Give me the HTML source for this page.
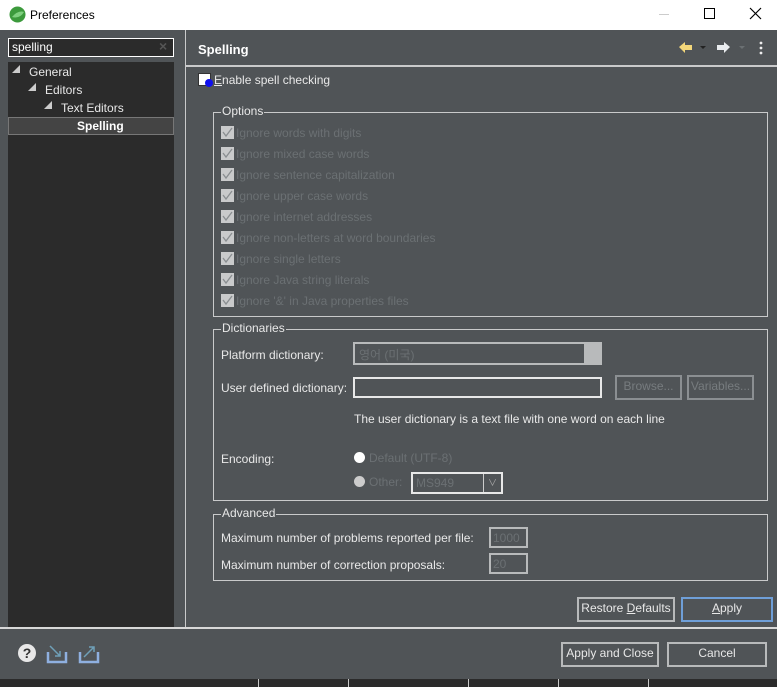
<!DOCTYPE html>
<html><head><meta charset="utf-8"><style>
*{margin:0;padding:0;box-sizing:border-box}
body{width:777px;height:687px;overflow:hidden;background:#505457;font-family:"Liberation Sans","Noto Sans CJK KR",sans-serif;font-size:12px;color:#e8e8e8;position:relative}
.a{position:absolute;white-space:nowrap}
.dis{color:#6b7073}
.cb{position:absolute;width:13px;height:13px;background:#c9cacb;left:221px}
.cb svg{position:absolute;left:1px;top:1px}
.grp{position:absolute;border:1px solid #c9cacb}
.gl{position:absolute;background:#505457;padding:0 1px;top:-9px;left:7px;color:#e8e8e8}
.btn{position:absolute;border:2px solid #b8babb;text-align:center;line-height:19px;color:#e8e8e8}
.dbtn{position:absolute;border:2px solid #8b8f92;text-align:center;line-height:19px;color:#777c7f}
</style></head><body>
<div class="a" style="left:0;top:0;width:777px;height:30px;background:#fff"></div>
<svg class="a" style="left:9px;top:6px" width="17" height="17"><circle cx="8.5" cy="8.5" r="8" fill="#3c9a3c"/><path d="M3 11 Q9 4 15 6 Q11 13 3 11Z" fill="#7fd07f"/></svg>
<div class="a" style="left:30px;top:8px;color:#000;font-size:12px">Preferences</div>
<div class="a" style="left:659px;top:14px;width:10px;height:1px;background:#ccc"></div>
<div class="a" style="left:704px;top:8px;width:11px;height:11px;border:1px solid #000"></div>
<svg class="a" style="left:749px;top:7px" width="13" height="13"><path d="M1 1L12 12M12 1L1 12" stroke="#000" stroke-width="1.2"/></svg>

<div class="a" style="left:8px;top:38px;width:166px;height:19px;border:1px solid #fff;background:#2b2b2b"></div>
<div class="a" style="left:12px;top:40px;color:#fff;font-size:12px">spelling</div>
<div class="a" style="left:159px;top:38px;color:#555;font-size:14px;font-weight:bold">×</div>
<div class="a" style="left:8px;top:62px;width:166px;height:566px;background:#2b2b2b"></div>
<div class="a" style="left:12px;top:64px;color:#ccc;font-size:8px">◢</div><div class="a" style="left:29px;top:65px">General</div>
<div class="a" style="left:28px;top:82px;color:#ccc;font-size:8px">◢</div><div class="a" style="left:45px;top:83px">Editors</div>
<div class="a" style="left:44px;top:100px;color:#ccc;font-size:8px">◢</div><div class="a" style="left:61px;top:101px">Text Editors</div>
<div class="a" style="left:8px;top:117px;width:166px;height:18px;background:#444;border:1px solid #777"></div>
<div class="a" style="left:77px;top:119px;font-weight:bold;color:#fff">Spelling</div>
<div class="a" style="left:185px;top:30px;width:1px;height:598px;background:#c9cacb"></div>

<div class="a" style="left:198px;top:42px;font-weight:bold;font-size:13px;color:#fff">Spelling</div>
<div class="a" style="left:186px;top:65px;width:591px;height:2px;background:#c9cacb"></div>
<svg class="a" style="left:678px;top:40px" width="90" height="16"><path d="M1 7L7 2V5H14V10H7V13Z" fill="#f3d77a"/><path d="M22 6L28 6L25 9Z" fill="#222"/><path d="M52 7L46 2V5H39V10H46V13Z" fill="#e9ecef"/><path d="M61 6L67 6L64 9Z" fill="#6b7073"/><circle cx="83" cy="3" r="1.4" fill="#eee"/><circle cx="83" cy="8" r="1.4" fill="#eee"/><circle cx="83" cy="13" r="1.4" fill="#eee"/></svg>

<div class="a" style="left:198px;top:73px;width:13px;height:13px;background:#fff;border:1px solid #333"></div>
<div class="a" style="left:205px;top:79px;width:8px;height:8px;border-radius:50%;background:#1010ee"></div>
<div class="a" style="left:214px;top:73px"><u>E</u>nable spell checking</div>

<div class="grp" style="left:213px;top:112px;width:555px;height:205px"><div class="gl">Options</div></div>
<div id="opts"></div>

<div class="grp" style="left:213px;top:329px;width:555px;height:172px"><div class="gl">Dictionaries</div></div>
<div class="a" style="left:221px;top:348px">Platform dictionary:</div>
<div class="a" style="left:353px;top:342px;width:249px;height:23px;border:2px solid #b8babb;background:#505457"></div>
<div class="a" style="left:584px;top:344px;width:16px;height:19px;background:#b8babb"></div>
<div class="a dis" style="left:359px;top:346px">영어 (미국)</div>
<div class="a" style="left:221px;top:381px">User defined dictionary:</div>
<div class="a" style="left:353px;top:377px;width:249px;height:21px;border:2px solid #e8e8e8"></div>
<div class="dbtn" style="left:615px;top:375px;width:67px;height:25px">Browse...</div>
<div class="dbtn" style="left:687px;top:375px;width:67px;height:25px">Variables...</div>
<div class="a" style="left:354px;top:412px">The user dictionary is a text file with one word on each line</div>
<div class="a" style="left:221px;top:452px">Encoding:</div>
<div class="a" style="left:354px;top:452px;width:11px;height:11px;border-radius:50%;background:#fff"></div>
<div class="a dis" style="left:369px;top:451px">Default (UTF-8)</div>
<div class="a" style="left:354px;top:476px;width:11px;height:11px;border-radius:50%;background:#ccc"></div>
<div class="a dis" style="left:369px;top:475px">Other:</div>
<div class="a" style="left:411px;top:472px;width:92px;height:22px;border:2px solid #e8e8e8"></div>
<div class="a" style="left:483px;top:474px;width:18px;height:18px;background:#505457;border-left:1px solid #ccc;color:#aaa;font-size:9px;text-align:center;line-height:18px">∨</div>
<div class="a dis" style="left:416px;top:476px">MS949</div>

<div class="grp" style="left:213px;top:514px;width:555px;height:67px"><div class="gl">Advanced</div></div>
<div class="a" style="left:221px;top:531px">Maximum number of problems reported per file:</div>
<div class="a" style="left:489px;top:527px;width:39px;height:21px;border:2px solid #b8babb"></div>
<div class="a dis" style="left:493px;top:531px">1000</div>
<div class="a" style="left:221px;top:558px">Maximum number of correction proposals:</div>
<div class="a" style="left:489px;top:553px;width:39px;height:21px;border:2px solid #b8babb"></div>
<div class="a dis" style="left:493px;top:557px">20</div>

<div class="btn" style="left:577px;top:597px;width:98px;height:25px">Restore <u>D</u>efaults</div>
<div class="btn" style="left:681px;top:597px;width:92px;height:25px;border-color:#6f9fd8"><u>A</u>pply</div>

<div class="a" style="left:0;top:627px;width:777px;height:2px;background:#d8d8d8"></div>
<svg class="a" style="left:17px;top:643px" width="90" height="22"><circle cx="10" cy="10" r="9" fill="#e8e8e8"/><text x="10" y="15" font-size="14" font-weight="bold" text-anchor="middle" fill="#333" font-family="Liberation Sans">?</text><path d="M31 9V19H49V9" stroke="#8fb0e0" stroke-width="2.5" fill="none"/><path d="M33 3L43 13M43 8V13H38" stroke="#6fa0b8" stroke-width="1.5" fill="none"/><path d="M63 9V19H81V9" stroke="#8fb0e0" stroke-width="2.5" fill="none"/><path d="M67 14L77 4M72 4H77V9" stroke="#6fa0b8" stroke-width="1.5" fill="none"/></svg>
<div class="btn" style="left:561px;top:642px;width:98px;height:25px">Apply and Close</div>
<div class="btn" style="left:667px;top:642px;width:100px;height:25px">Cancel</div>
<div class="a" style="left:0;top:679px;width:777px;height:8px;background:#2b2b2b"></div>
<div class="a" style="left:258px;top:679px;width:1px;height:8px;background:#ccc"></div>
<div class="a" style="left:348px;top:679px;width:1px;height:8px;background:#ccc"></div>
<div class="a" style="left:468px;top:679px;width:1px;height:8px;background:#ccc"></div>
<div class="a" style="left:558px;top:679px;width:1px;height:8px;background:#ccc"></div>
<div class="a" style="left:648px;top:679px;width:1px;height:8px;background:#ccc"></div>

<div class="cb" style="top:126px"><svg width="11" height="11"><path d="M1 5L4 9L10 1" stroke="#8a8e91" stroke-width="1.3" fill="none"/></svg></div><div class="a dis" style="left:236px;top:126px">Ignore words with digits</div>
<div class="cb" style="top:147px"><svg width="11" height="11"><path d="M1 5L4 9L10 1" stroke="#8a8e91" stroke-width="1.3" fill="none"/></svg></div><div class="a dis" style="left:236px;top:147px">Ignore mixed case words</div>
<div class="cb" style="top:168px"><svg width="11" height="11"><path d="M1 5L4 9L10 1" stroke="#8a8e91" stroke-width="1.3" fill="none"/></svg></div><div class="a dis" style="left:236px;top:168px">Ignore sentence capitalization</div>
<div class="cb" style="top:189px"><svg width="11" height="11"><path d="M1 5L4 9L10 1" stroke="#8a8e91" stroke-width="1.3" fill="none"/></svg></div><div class="a dis" style="left:236px;top:189px">Ignore upper case words</div>
<div class="cb" style="top:210px"><svg width="11" height="11"><path d="M1 5L4 9L10 1" stroke="#8a8e91" stroke-width="1.3" fill="none"/></svg></div><div class="a dis" style="left:236px;top:210px">Ignore internet addresses</div>
<div class="cb" style="top:231px"><svg width="11" height="11"><path d="M1 5L4 9L10 1" stroke="#8a8e91" stroke-width="1.3" fill="none"/></svg></div><div class="a dis" style="left:236px;top:231px">Ignore non-letters at word boundaries</div>
<div class="cb" style="top:252px"><svg width="11" height="11"><path d="M1 5L4 9L10 1" stroke="#8a8e91" stroke-width="1.3" fill="none"/></svg></div><div class="a dis" style="left:236px;top:252px">Ignore single letters</div>
<div class="cb" style="top:273px"><svg width="11" height="11"><path d="M1 5L4 9L10 1" stroke="#8a8e91" stroke-width="1.3" fill="none"/></svg></div><div class="a dis" style="left:236px;top:273px">Ignore Java string literals</div>
<div class="cb" style="top:294px"><svg width="11" height="11"><path d="M1 5L4 9L10 1" stroke="#8a8e91" stroke-width="1.3" fill="none"/></svg></div><div class="a dis" style="left:236px;top:294px">Ignore '&amp;' in Java properties files</div>
</body></html>
